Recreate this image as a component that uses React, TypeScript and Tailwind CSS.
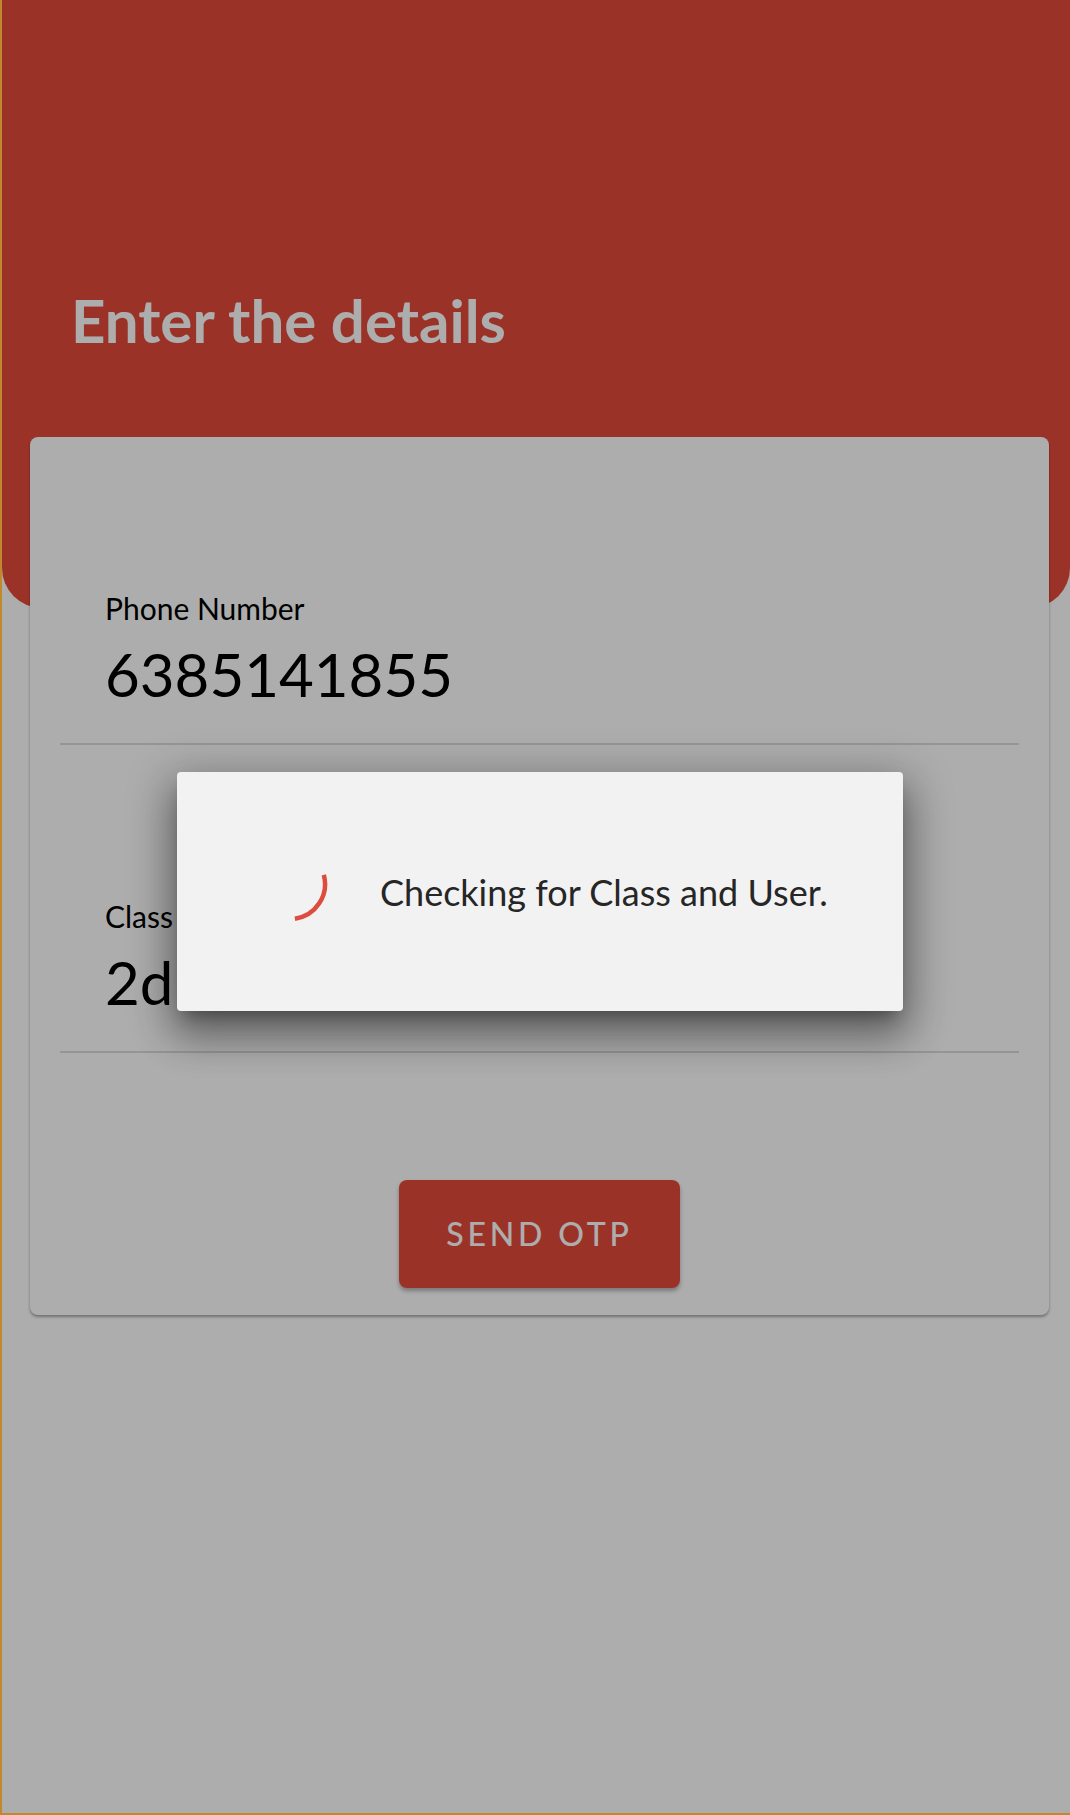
import React from 'react';

function Field({ label, value }: { label: string; value: string }) {
    return (
        <div className="pt-[154px]">
            <div className="pl-[45px] text-[30px] leading-[35px] text-black">{label}</div>
            <div className="mt-[12px] pl-[45px] text-[60px] leading-[72px] text-black">{value}</div>
            <div className="mt-[33px] h-[2px] bg-[#dcdcdc]" />
        </div>
    );
}

function Spinner() {
    return (
        <svg width="80" height="80" viewBox="0 0 80 80" className="mb-[15px] shrink-0">
            <path d="M 73.8 30.9 A 35 35 0 0 1 44.9 74.7" fill="none" stroke="#dc4d3d" strokeWidth="4.5" />
        </svg>
    );
}

export default function App() {
    return (
        <div className="relative min-h-[1815px] w-full bg-white border-l-2 border-b-2 border-[#c08a2c] font-['Lato',sans-serif]">
            {/* header */}
            <div className="h-[608px] bg-[#e54b3c] rounded-b-[40px] pt-[284px] pl-[69px]">
                <h1 className="text-[60px] leading-[72px] font-bold text-white">Enter the details</h1>
            </div>

            {/* form card */}
            <div className="relative -mt-[171px] ml-[28px] mr-[21px] rounded-lg bg-white px-[30px] pb-[27px] shadow-[0_2px_3px_rgba(0,0,0,0.35)]">
                <Field label="Phone Number" value="6385141855" />
                <Field label="Class" value="2d" />
                <div className="mt-[127px] flex justify-center">
                    <button className="w-[281px] h-[108px] rounded-lg bg-[#e54b3c] text-white text-[32px] font-medium tracking-[0.12em] shadow-[0_3px_4px_rgba(0,0,0,0.3)]">
                        SEND OTP
                    </button>
                </div>
            </div>

            {/* loading dialog */}
            <div className="absolute inset-0 bg-black/[0.32] flex items-center justify-center pl-[8px] pb-[30px]">
                <div className="w-[726px] h-[239px] rounded bg-[#f2f2f2] flex items-center pl-[73px] shadow-[0_24px_38px_3px_rgba(0,0,0,0.3),0_9px_46px_8px_rgba(0,0,0,0.22),0_11px_15px_-7px_rgba(0,0,0,0.3)]">
                    <Spinner />
                    <span className="ml-[50px] text-[36px] text-[#262626]">Checking for Class and User.</span>
                </div>
            </div>
        </div>
    );
}
